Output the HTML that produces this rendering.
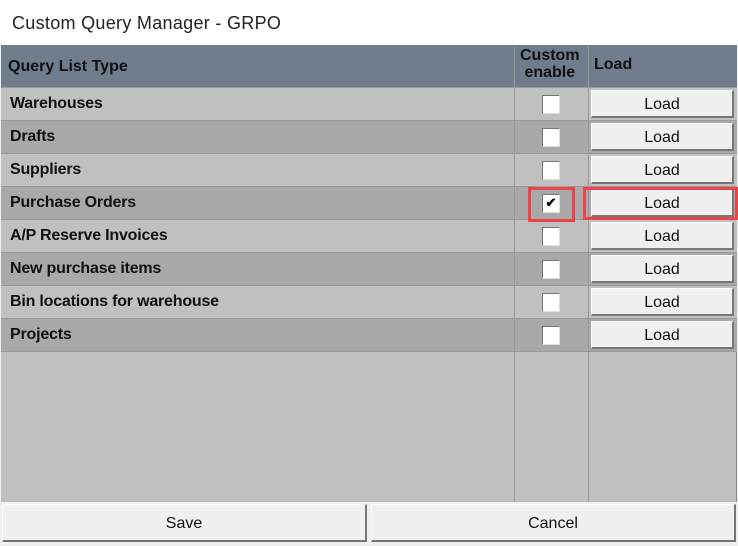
<!DOCTYPE html>
<html><head><style>
*{margin:0;padding:0;box-sizing:border-box}
body{width:738px;height:546px;position:relative;background:#f0f0f0;font-family:"Liberation Sans",Arial,sans-serif;overflow:hidden}
.title{position:absolute;left:0;top:0;width:738px;height:45px;background:#fff;font-size:18px;color:#222;padding:13px 0 0 12px;letter-spacing:0.3px}
.grid{position:absolute;left:1px;top:45px;width:736px;height:457px;background:#c0c0c0;border-right:1px solid #888}
.hdr{position:absolute;left:0;top:0;width:736px;height:43px;background:#6f7d8d;border-bottom:1px solid #999}
.hdr div{position:absolute;font-weight:bold;font-size:16px;color:#111}
.row{position:absolute;left:0;width:736px;height:33px;border-bottom:1px solid #999}
.row .lbl{position:absolute;left:9px;top:7px;font-weight:bold;font-size:16px;color:#111;letter-spacing:-0.2px}
.vl{position:absolute;top:0;width:1px;height:457px;background:#999}
.cb{position:absolute;left:541px;top:7px;width:18px;height:19px;background:#fff;border:1px solid #777;border-right-color:#ddd;border-bottom-color:#ddd}
.btn{position:absolute;left:590px;top:2px;width:143px;height:28px;background:#f0f0f0;border:1px solid #fff;border-right:2px solid #777;border-bottom:2px solid #777;font-size:16px;text-align:center;line-height:28px;color:#111}
.red{position:absolute;border:3px solid #e8464a}
.fb{position:absolute;top:504px;height:38px;background:#f0f0f0;border:1px solid #fff;border-right:2px solid #777;border-bottom:2px solid #777;font-size:16px;text-align:center;line-height:38px;color:#111}
</style></head><body>
<div class="title">Custom Query Manager - GRPO</div>
<div class="grid">
<div class="hdr">
<div style="left:7px;top:13px">Query List Type</div>
<div style="left:519px;top:2px;line-height:17px;text-align:center">Custom<br>enable</div>
<div style="left:593px;top:11px">Load</div>
</div>
<div class="row" style="top:43px;background:#c0c0c0"><div class="lbl">Warehouses</div><div class="cb"></div><div class="btn">Load</div></div>
<div class="row" style="top:76px;background:#a9a9a9"><div class="lbl">Drafts</div><div class="cb"></div><div class="btn">Load</div></div>
<div class="row" style="top:109px;background:#c0c0c0"><div class="lbl">Suppliers</div><div class="cb"></div><div class="btn">Load</div></div>
<div class="row" style="top:142px;background:#a9a9a9"><div class="lbl">Purchase Orders</div><div class="cb" style="font-size:13px;line-height:16px;text-align:center;font-weight:bold">✔</div><div class="btn">Load</div></div>
<div class="row" style="top:175px;background:#c0c0c0"><div class="lbl">A/P Reserve Invoices</div><div class="cb"></div><div class="btn">Load</div></div>
<div class="row" style="top:208px;background:#a9a9a9"><div class="lbl">New purchase items</div><div class="cb"></div><div class="btn">Load</div></div>
<div class="row" style="top:241px;background:#c0c0c0"><div class="lbl">Bin locations for warehouse</div><div class="cb"></div><div class="btn">Load</div></div>
<div class="row" style="top:274px;background:#a9a9a9"><div class="lbl">Projects</div><div class="cb"></div><div class="btn">Load</div></div>
<div class="vl" style="left:513px"></div>
<div class="vl" style="left:587px"></div>
</div>
<div class="red" style="left:528px;top:187px;width:47px;height:35px"></div>
<div class="red" style="left:583px;top:187px;width:155px;height:33px"></div>
<div class="fb" style="left:2px;width:365px">Save</div>
<div class="fb" style="left:371px;width:365px">Cancel</div>
</body></html>
